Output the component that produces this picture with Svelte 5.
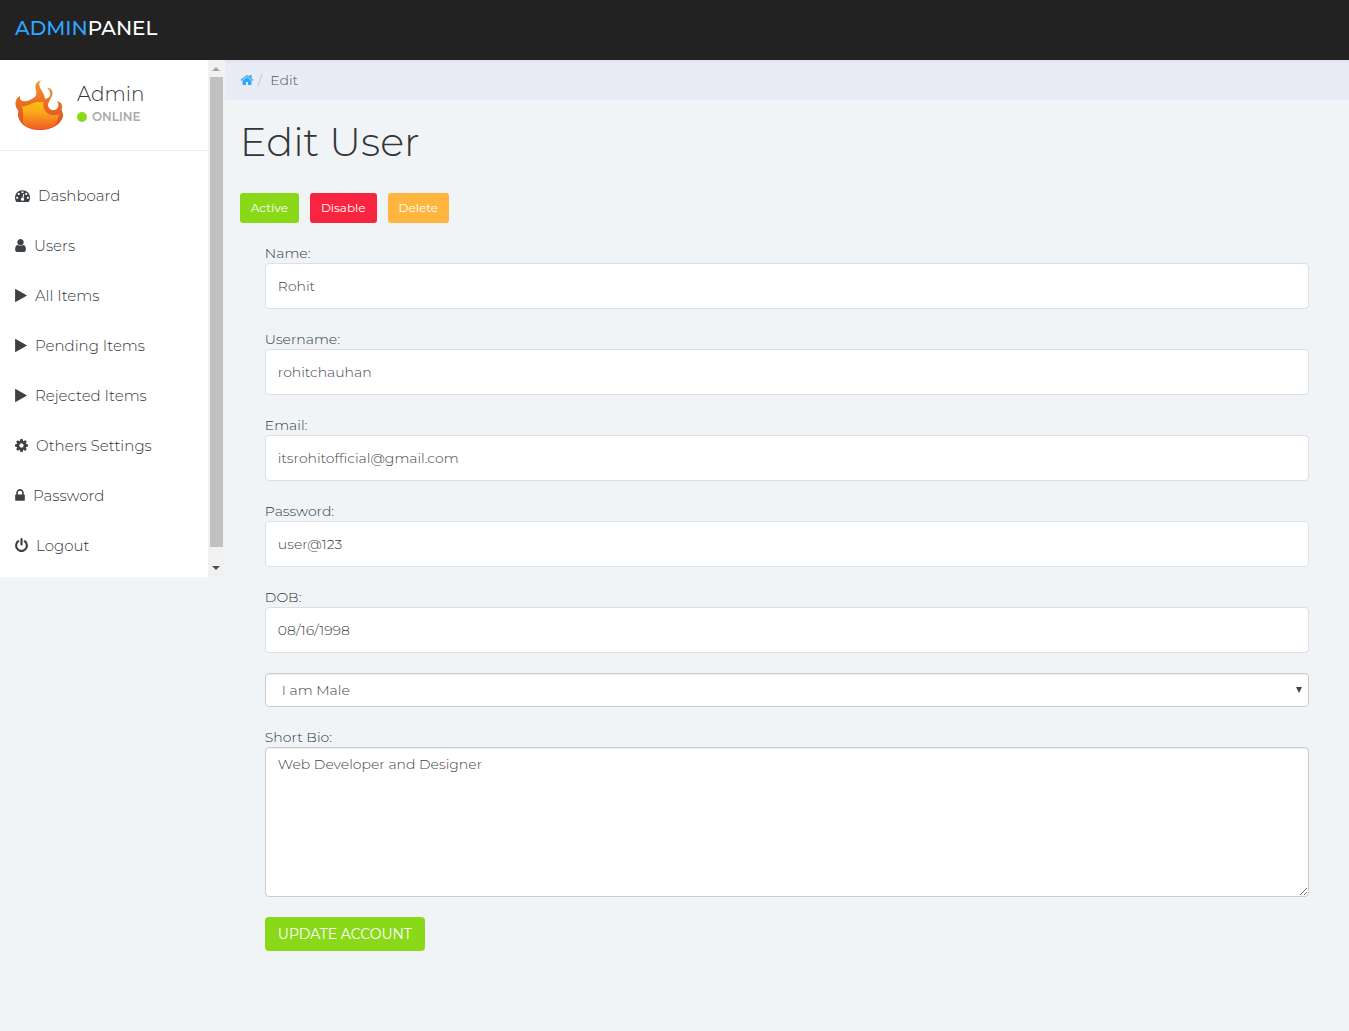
<script lang="ts">
  const icons = {
    home: "M1472 992v480q0 26-19 45t-45 19h-384v-384h-256v384h-384q-26 0-45-19t-19-45v-480q0-1 .5-3t.5-3l575-474 575 474q1 2 1 6zm223-69l-62 74q-8 9-21 11h-3q-13 0-21-7l-692-577-692 577q-12 8-24 7-13-2-21-11l-62-74q-8-10-7-23.5t11-21.5l719-599q32-26 76-26t76 26l244 204v-195q0-14 9-23t23-9h192q14 0 23 9t9 23v408l219 182q10 8 11 21.5t-7 23.5z",
    dashboard:
      "M384 1152q0-53-37.5-90.5t-90.5-37.5-90.5 37.5-37.5 90.5 37.5 90.5 90.5 37.5 90.5-37.5 37.5-90.5zm192-448q0-53-37.5-90.5t-90.5-37.5-90.5 37.5-37.5 90.5 37.5 90.5 90.5 37.5 90.5-37.5 37.5-90.5zm428 481l101-382q6-26-7.5-48.5t-38.5-29.5-48 6.5-30 39.5l-101 382q-60 5-107 43.5t-63 98.5q-20 77 20 146t117 89 146-20 89-117q16-60-6-117t-72-91zm660-33q0-53-37.5-90.5t-90.5-37.5-90.5 37.5-37.5 90.5 37.5 90.5 90.5 37.5 90.5-37.5 37.5-90.5zm-640-640q0-53-37.5-90.5t-90.5-37.5-90.5 37.5-37.5 90.5 37.5 90.5 90.5 37.5 90.5-37.5 37.5-90.5zm448 192q0-53-37.5-90.5t-90.5-37.5-90.5 37.5-37.5 90.5 37.5 90.5 90.5 37.5 90.5-37.5 37.5-90.5zm320 448q0 261-141 483-19 29-54 29h-1402q-35 0-54-29-141-221-141-483 0-182 71-348t191-286 286-191 348-71 348 71 286 191 191 286 71 348z",
    user: "M1536 1399q0 109-62.5 187t-150.5 78h-854q-88 0-150.5-78t-62.5-187q0-85 8.5-160.5t31.5-152 58.5-131 94-89 134.5-34.5q131 128 313 128t313-128q76 0 134.5 34.5t94 89 58.5 131 31.5 152 8.5 160.5zm-256-887q0 159-112.5 271.5t-271.5 112.5-271.5-112.5-112.5-271.5 112.5-271.5 271.5-112.5 271.5 112.5 112.5 271.5z",
    play: "M1576 927l-1328 738q-23 13-39.5 3t-16.5-36v-1472q0-26 16.5-36t39.5 3l1328 738q23 13 23 31t-23 31z",
    cog: "M1152 896q0-106-75-181t-181-75-181 75-75 181 75 181 181 75 181-75 75-181zm512-109v222q0 12-8 23t-20 13l-185 28q-19 54-39 91 35 50 107 138 10 12 10 25t-9 23q-27 37-99 108t-94 71q-12 0-26-9l-138-108q-44 23-91 38-16 136-29 186-7 28-36 28h-222q-14 0-24.5-8.5t-11.5-21.5l-28-184q-49-16-90-37l-141 107q-10 9-25 9-14 0-25-11-126-114-165-168-7-10-7-23 0-12 8-23 15-21 51-66.5t54-70.5q-27-50-41-99l-183-27q-13-2-21-12.5t-8-23.5v-222q0-12 8-23t19-13l186-28q14-46 39-92-40-57-107-138-10-12-10-24 0-10 9-23 26-36 98.5-107.5t94.5-71.5q13 0 26 10l138 107q44-23 91-38 16-136 29-186 7-28 36-28h222q14 0 24.5 8.5t11.5 21.5l28 184q49 16 90 37l142-107q9-9 24-9 13 0 25 10 129 119 165 170 7 8 7 22 0 12-8 23-15 21-51 66.5t-54 70.5q26 50 41 98l183 28q13 2 21 12.5t8 23.5z",
    lock: "M640 768h512v-192q0-106-75-181t-181-75-181 75-75 181v192zm832 96v576q0 40-28 68t-68 28h-960q-40 0-68-28t-28-68v-576q0-40 28-68t68-28h32v-192q0-184 132-316t316-132 316 132 132 316v192h32q40 0 68 28t28 68z",
    power:
      "M1664 896q0 156-61 298t-164 245-245 164-298 61-298-61-245-164-164-245-61-298q0-182 80.5-343t226.5-270q43-32 95.5-25t83.5 50q32 42 24.5 94.5t-49.5 84.5q-98 74-151.5 181t-53.5 228q0 104 40.5 198.5t109.5 163.5 163.5 109.5 198.5 40.5 198.5-40.5 163.5-109.5 109.5-163.5 40.5-198.5q0-121-53.5-228t-151.5-181q-42-32-49.5-84.5t24.5-94.5q31-43 84-50t95 25q146 109 226.5 270t80.5 343zm-640-768v640q0 52-38 90t-90 38-90-38-38-90v-640q0-52 38-90t90-38 90 38 38 90z",
  };

  // left and span crop the square glyph to its own advance width
  const menu = [
    { label: "Dashboard", icon: icons.dashboard, left: 0, span: 1792, width: 15 },
    { label: "Users", icon: icons.user, left: 256, span: 1280, width: 11 },
    { label: "All Items", icon: icons.play, left: 192, span: 1408, width: 12 },
    { label: "Pending Items", icon: icons.play, left: 192, span: 1408, width: 12 },
    { label: "Rejected Items", icon: icons.play, left: 192, span: 1408, width: 12 },
    { label: "Others Settings", icon: icons.cog, left: 128, span: 1536, width: 13 },
    { label: "Password", icon: icons.lock, left: 320, span: 1152, width: 10 },
    { label: "Logout", icon: icons.power, left: 128, span: 1536, width: 13 },
  ];

  let fields = $state([
    { id: "name", label: "Name:", value: "Rohit" },
    { id: "username", label: "Username:", value: "rohitchauhan" },
    { id: "email", label: "Email:", value: "itsrohitofficial@gmail.com" },
    { id: "password", label: "Password:", value: "user@123" },
    { id: "dob", label: "DOB:", value: "08/16/1998" },
  ]);
  let gender = $state("male");
  let bio = $state("Web Developer and Designer");
</script>

<header class="navbar">
  <a class="brand" href="#home"><span>ADMIN</span>PANEL</a>
</header>

<div class="layout">
  <aside class="sidebar">
    <div class="sidebar-content">
      <div class="profile">
        <svg class="flame" viewBox="32 24 144 150" aria-hidden="true">
          <defs>
            <linearGradient id="outer" x1="0" y1="0" x2="0" y2="1">
              <stop offset="0" stop-color="#f39a2a" />
              <stop offset="0.5" stop-color="#ea6a25" />
              <stop offset="1" stop-color="#e04a26" />
            </linearGradient>
            <linearGradient id="inner" x1="0" y1="0" x2="0" y2="1">
              <stop offset="0" stop-color="#fdc010" />
              <stop offset="0.4" stop-color="#fba41b" />
              <stop offset="1" stop-color="#ee5a22" />
            </linearGradient>
          </defs>
          <path
            fill="url(#outer)"
            d="M110 24C99 32 103 45 110 55C116 64 119 72 121 81C133 79 138 72 136 63C135 56 131 51 127 48C139 47 145 57 142 69C139 82 129 89 130 101C132 115 151 119 158 108C163 100 160 92 156 88C169 89 174 99 171 110C169 118 176 123 175 131C170 156 142 174 106 174C71 174 46 158 40 134C38 127 42 120 39 113C29 103 28 80 46 71C43 83 49 88 58 88C70 88 79 82 87 77C98 70 95 58 92 49C90 36 98 27 110 24Z"
          />
          <path
            fill="url(#inner)"
            d="M50 103C65 104 72 99 82 94C93 88 106 90 116 90C113 108 121 120 134 127C144 133 158 127 164 129C154 137 163 149 150 159C130 177 84 178 60 160C48 150 61 127 50 103Z"
          />
        </svg>
        <div>
          <div class="profile-name">Admin</div>
          <div class="profile-status"><span class="dot"></span>ONLINE</div>
        </div>
      </div>
      <nav class="menu">
        {#each menu as item}
          <a href="#menu">
            <svg
              viewBox="{item.left} 0 {item.span} 1792"
              width={item.width}
              height="15"
              aria-hidden="true"><path d={item.icon} /></svg
            >
            {item.label}
          </a>
        {/each}
      </nav>
    </div>
    <div class="scrollbar" aria-hidden="true">
      <span class="scroll-up"></span>
      <span class="scroll-thumb"></span>
      <span class="scroll-down"></span>
    </div>
  </aside>

  <main>
    <nav class="breadcrumb" aria-label="Breadcrumb">
      <a href="#home" aria-label="Home">
        <svg viewBox="0 0 1792 1792" width="14" height="14"><path d={icons.home} /></svg>
      </a>
      <span class="slash">/</span>
      <span>Edit</span>
    </nav>

    <div class="content">
      <h1>Edit User</h1>
      <div class="actions">
        <button class="btn success" type="button">Active</button>
        <button class="btn danger" type="button">Disable</button>
        <button class="btn warning" type="button">Delete</button>
      </div>

      <form onsubmit={(e) => e.preventDefault()}>
        {#each fields as field}
          <div class="group">
            <label for={field.id}>{field.label}</label>
            <input id={field.id} type="text" bind:value={field.value} />
          </div>
        {/each}
        <div class="group select">
          <select aria-label="Gender" bind:value={gender}>
            <option value="male">I am Male</option>
            <option value="female">I am Female</option>
          </select>
        </div>
        <div class="group">
          <label for="bio">Short Bio:</label>
          <textarea id="bio" bind:value={bio}></textarea>
        </div>
        <button class="btn success large" type="submit">UPDATE ACCOUNT</button>
      </form>
    </div>
  </main>
</div>

<style>
  :global(body) {
    background: #f0f4f7;
    color: #333638;
    font-family: Montserrat, Inter, "Open Sans", sans-serif;
    font-size: 14px;
    font-weight: 300;
    line-height: 20px;
  }
  * {
    box-sizing: border-box;
  }
  a {
    color: inherit;
    text-decoration: none;
  }
  svg {
    fill: currentColor;
    flex-shrink: 0;
  }
  .navbar {
    background: #222222;
    height: 60px;
    padding: 18px 15px;
  }
  .brand {
    color: #ffffff;
    font-size: 20px;
    font-weight: 500;
  }
  .brand span {
    color: #30a5ff;
  }
  .layout {
    display: grid;
    grid-template-columns: 1fr 5fr;
    align-items: start;
  }
  .sidebar {
    display: flex;
    background: #ffffff;
  }
  .sidebar-content {
    flex: 1;
    padding-bottom: 6px;
  }
  .profile {
    display: flex;
    gap: 13px;
    height: 91px;
    padding: 20px 15px;
    border-bottom: 1px solid #e9ecf2;
  }
  .flame {
    width: 49px;
    height: 50px;
  }
  .profile-name {
    font-size: 20px;
    line-height: 28px;
  }
  .profile-status {
    display: flex;
    align-items: center;
    gap: 5px;
    color: #aaaaaa;
    font-size: 12px;
    font-weight: 600;
    line-height: 18px;
  }
  .dot {
    width: 10px;
    height: 10px;
    border-radius: 50%;
    background: #8ad919;
  }
  .menu {
    padding-top: 20px;
  }
  .menu a {
    display: flex;
    align-items: center;
    gap: 8px;
    height: 50px;
    padding: 0 15px;
    font-size: 15px;
  }
  .menu svg {
    height: 16px;
    padding-bottom: 1px;
    fill: #3c4146;
  }
  .scrollbar {
    display: flex;
    flex-direction: column;
    align-items: center;
    justify-content: space-between;
    width: 17px;
    padding: 7px 0;
    background: #f1f1f1;
  }
  .scroll-up,
  .scroll-down {
    border: 4px solid transparent;
  }
  .scroll-up {
    border-top: 0;
    border-bottom-color: #a3a3a3;
  }
  .scroll-down {
    border-bottom: 0;
    border-top-color: #505050;
  }
  .scroll-thumb {
    flex: 1;
    width: 13px;
    margin: 6px 0 19px;
    background: #c1c1c1;
  }
  .breadcrumb {
    display: flex;
    align-items: center;
    height: 40px;
    padding: 0 15px;
    background: #e9ecf4;
    box-shadow: inset 0 6px 6px -6px #d4dae8;
    color: #4f5458;
  }
  .breadcrumb a {
    display: flex;
    color: #30a5ff;
  }
  .slash {
    padding: 0 8px 0 4px;
    color: #b4b8bd;
  }
  .content {
    padding: 0 15px;
  }
  h1 {
    margin: 20px 0 29px;
    font-size: 40px;
    font-weight: 300;
    line-height: 44px;
  }
  .actions {
    display: flex;
    gap: 11px;
  }
  .btn {
    height: 30px;
    padding: 0 11px;
    border: 0;
    border-radius: 3px;
    color: #ffffff;
    font: inherit;
    font-size: 12px;
    font-weight: 400;
    cursor: pointer;
  }
  .success {
    background: #8ad919;
  }
  .danger {
    background: #f9243f;
  }
  .warning {
    background: #ffb53e;
  }
  .large {
    height: 34px;
    padding: 0 13px;
    border-radius: 4px;
    font-size: 14px;
  }
  form {
    padding: 20px 25px 80px;
  }
  .group {
    margin-bottom: 20px;
  }
  label {
    display: block;
  }
  input,
  select,
  textarea {
    display: block;
    width: 100%;
    border: 1px solid #cccccc;
    border-radius: 4px;
    background: #ffffff;
    color: #3f4244;
    font: inherit;
    box-shadow: inset 0 1px 1px rgba(0, 0, 0, 0.08);
  }
  input {
    height: 46px;
    padding: 0 12px;
    border-color: #dddfe4;
    box-shadow: none;
  }
  select {
    height: 34px;
    padding: 0 16px;
    appearance: none;
  }
  .select {
    position: relative;
  }
  .select::after {
    content: "";
    position: absolute;
    top: 14px;
    right: 7px;
    border: 3px solid transparent;
    border-top: 6px solid #444444;
    border-bottom: 0;
    pointer-events: none;
  }
  textarea {
    height: 150px;
    padding: 6px 12px;
    resize: vertical;
  }
</style>
